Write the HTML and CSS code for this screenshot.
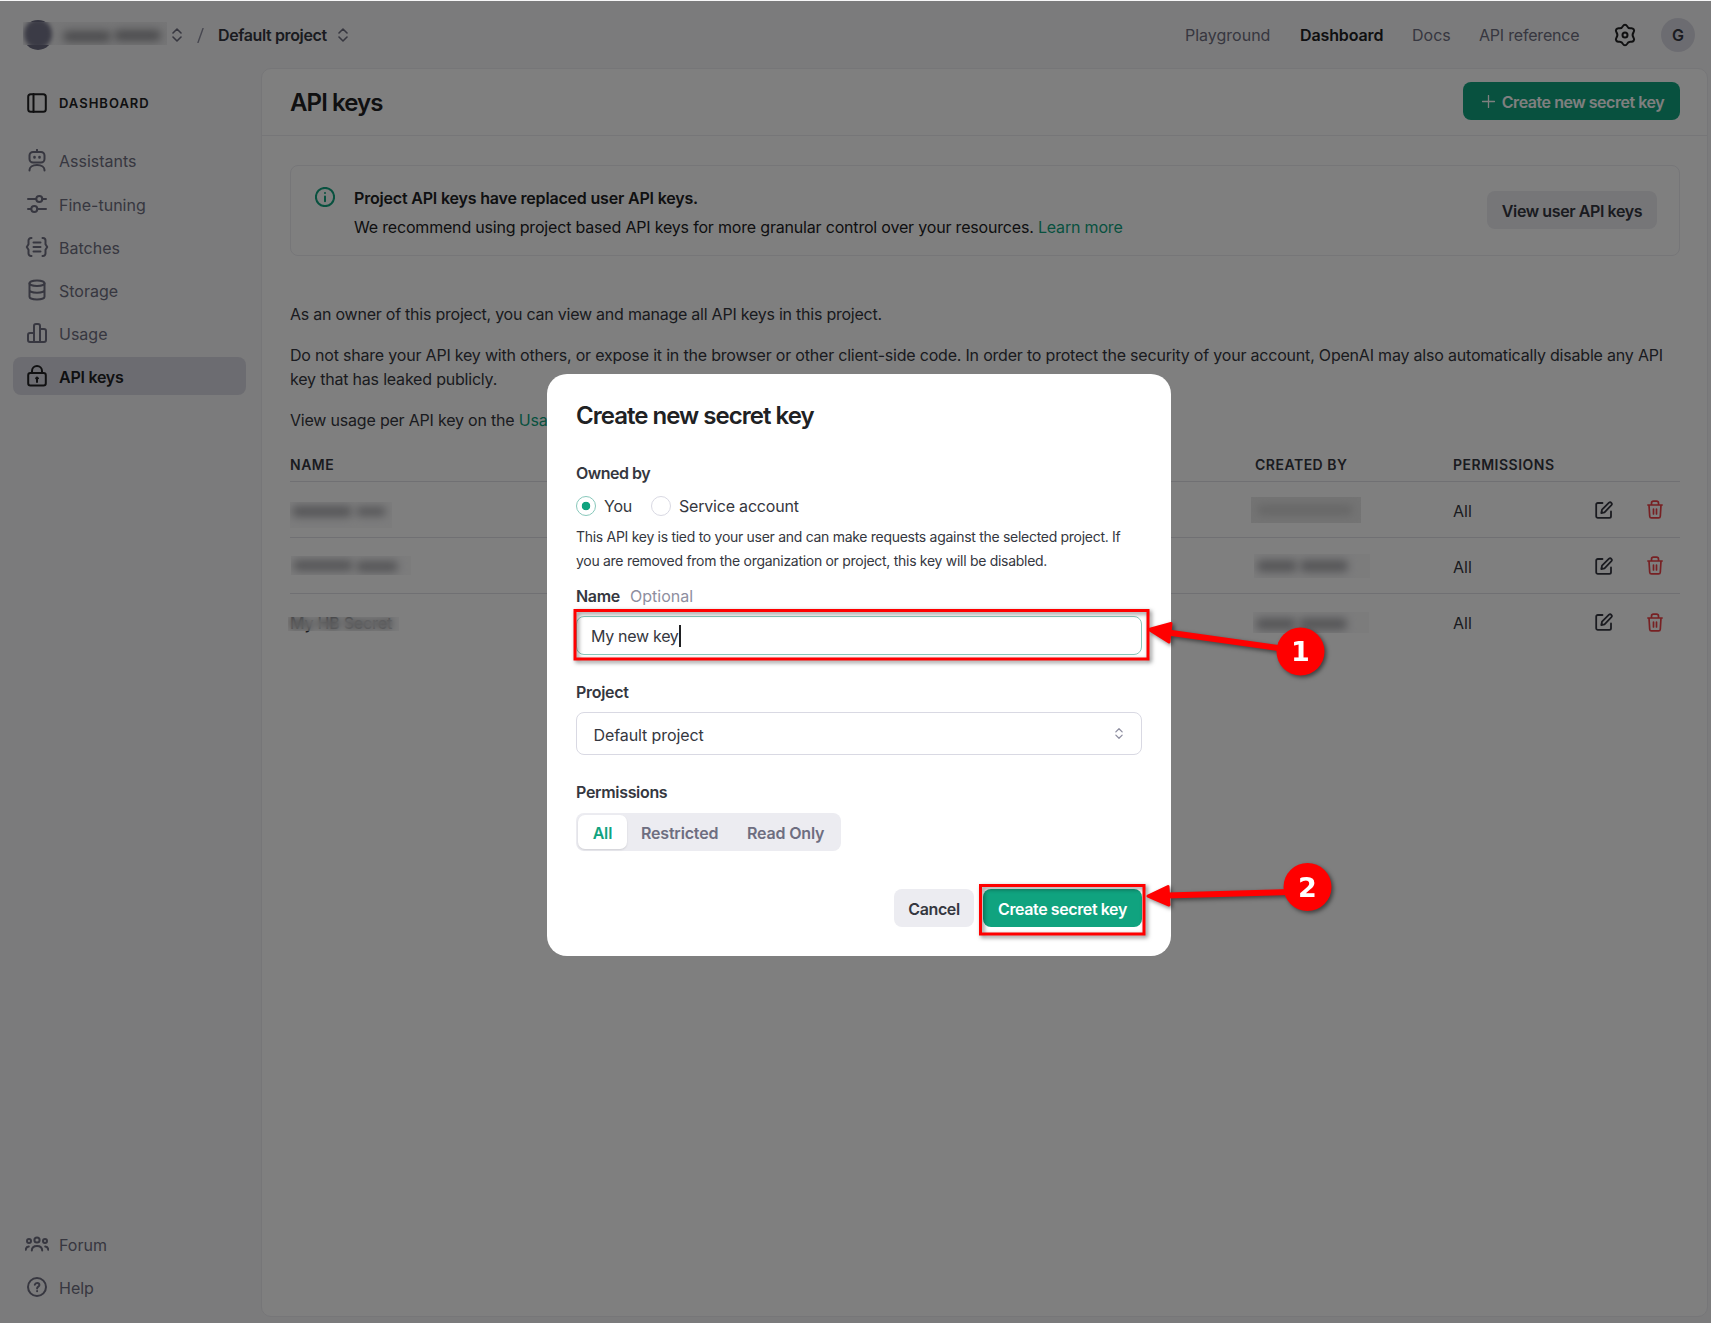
FILE: index.html
```html
<!DOCTYPE html>
<html lang="en">
<head>
<meta charset="utf-8">
<title>API keys</title>
<link rel="stylesheet" href="styles.css">
</head>
<body>
<div class="app">
  <header class="topbar">
    <div class="crumbs">
      <div class="org"><span class="org-avatar"></span><span class="org-veil"><i class="org-dot"></i><i class="smudge smudge-org-a"></i><i class="smudge smudge-org-b"></i></span></div>
      <svg class="updown" viewBox="0 0 10 14"><path d="M1 5l4-4 4 4M1 9l4 4 4-4"/></svg>
      <svg class="slash" viewBox="0 0 7 15"><path d="M6 .5L1 14.5"/></svg>
      <span class="crumb-project">Default project</span>
      <svg class="updown" viewBox="0 0 10 14"><path d="M1 5l4-4 4 4M1 9l4 4 4-4"/></svg>
    </div>
    <nav class="topnav">
      <a class="nav-play">Playground</a>
      <a class="nav-dash">Dashboard</a>
      <a class="nav-docs">Docs</a>
      <a class="nav-ref">API reference</a>
      <svg class="gear" viewBox="0 0 24 24"><path d="M14.100 3.100C14.900 4.900 16.200 5.500 17.900 5.200C20.500 4.900 21.900 7.300 20.600 9.200C19.300 11 19.300 13 20.600 14.800C21.900 16.700 20.500 19.100 17.900 18.800C16.200 18.500 14.900 19.100 14.100 20.900C13.100 22.800 10.900 22.800 9.900 20.900C9.100 19.100 7.800 18.500 6.100 18.800C3.500 19.100 2.100 16.700 3.400 14.800C4.700 13 4.700 11 3.400 9.200C2.100 7.300 3.500 4.900 6.100 5.200C7.800 5.500 9.100 4.900 9.900 3.100C10.900 1.200 13.100 1.200 14.100 3.100z"/><circle cx="12" cy="12" r="2.500"/></svg>
      <span class="avatar">G</span>
    </nav>
  </header>
  <div class="body">
    <aside class="sidebar">
      <div class="side-title"><svg viewBox="0 0 24 24"><rect x="3.200" y="3.200" width="17.600" height="17.600" rx="2.500"/><path d="M8.500 3v18"/></svg><span>DASHBOARD</span></div>
      <a class="item first"><svg viewBox="0 0 24 24"><rect x="4.500" y="3" width="15" height="10.500" rx="3.500"/><path d="M12 .8v2M4.500 21.500v-.5c0-2.800 2.700-5 7.500-5s7.500 2.200 7.500 5v.5"/><path class="dots" d="M9.500 8.100v.3M14.500 8.100v.3"/></svg><span>Assistants</span></a>
      <a class="item"><svg viewBox="0 0 24 24"><path d="M3 7h8M17 7h4M3 17h3M12 17h9"/><circle cx="14.300" cy="7" r="3"/><circle cx="9.300" cy="17" r="3"/></svg><span>Fine-tuning</span></a>
      <a class="item"><svg viewBox="0 0 24 24"><path d="M6.500 3H6a2.500 2.500 0 0 0-2.500 2.500v3.700L1.800 12l1.700 2.800v3.700A2.500 2.500 0 0 0 6 21h.5M17.500 3h.5a2.500 2.500 0 0 1 2.500 2.500v3.700l1.700 2.800-1.700 2.800v3.700A2.500 2.500 0 0 1 18 21h-.5M8.500 7.500h7M8.500 12h7M8.500 16.500h7"/></svg><span>Batches</span></a>
      <a class="item"><svg viewBox="0 0 24 24"><ellipse cx="12" cy="5.200" rx="7.500" ry="2.800"/><path d="M4.500 5.200v13.600c0 1.500 3.300 2.800 7.500 2.800s7.500-1.300 7.500-2.800V5.200M4.500 12c0 1.500 3.300 2.800 7.500 2.800s7.500-1.300 7.500-2.800"/></svg><span>Storage</span></a>
      <a class="item"><svg viewBox="0 0 24 24"><path d="M9 21H5a2 2 0 0 1-2-2v-5a2 2 0 0 1 2-2h4m0 9V5a2 2 0 0 1 2-2h2a2 2 0 0 1 2 2v16m-6 0h10a2 2 0 0 0 2-2v-9a2 2 0 0 0-2-2h-4"/></svg><span>Usage</span></a>
      <a class="item active"><svg viewBox="0 0 24 24"><rect x="3.200" y="9" width="17.600" height="12.500" rx="2.200"/><path d="M7 9V7a5 5 0 0 1 10 0v2M12 15v3"/><circle class="fill" cx="12" cy="14.300" r="1.300"/></svg><span>API keys</span></a>
      <div class="side-foot">
        <a class="item"><svg viewBox="0 0 24 18"><circle cx="12" cy="5" r="2.600"/><circle cx="4" cy="6" r="2"/><circle cx="20" cy="6" r="2"/><path d="M6.800 15.500c0-3 2.200-4.600 5.200-4.600s5.200 1.600 5.200 4.600M.8 14.800c0-1.900 1.200-3.100 3-3.300M23.200 14.800c0-1.900-1.200-3.100-3-3.300"/></svg><span>Forum</span></a>
        <a class="item"><svg viewBox="0 0 24 24"><circle cx="12" cy="12" r="9"/><path d="M9.800 9.700c.3-1.200 1.200-1.800 2.300-1.800 1.300 0 2.300.9 2.300 2 0 1.700-2.300 1.700-2.300 3.500M12.100 16v.3"/></svg><span>Help</span></a>
      </div>
    </aside>
    <main class="panel">
      <div class="panel-head">
        <h1>API keys</h1>
        <button class="btn create"><svg viewBox="0 0 14 14"><path d="M7 .5v13M.5 7h13"/></svg><span>Create new secret key</span></button>
      </div>
      <div class="content">
        <section class="notice">
          <svg class="info" viewBox="0 0 20 20"><circle cx="10" cy="10" r="9.100"/><path d="M10 9.500v4.700M10 5.900v.1"/></svg>
          <div class="notice-text"><strong>Project API keys have replaced user API keys.</strong><p>We recommend using project based API keys for more granular control over your resources. <a>Learn more</a></p></div>
          <button class="btn view">View user API keys</button>
        </section>
        <div class="prose">
          <p class="p1">As an owner of this project, you can view and manage all API keys in this project.</p>
          <p>Do not share your API key with others, or expose it in the browser or other client-side code. In order to protect the security of your account, OpenAI may also automatically disable any API<br>key that has leaked publicly.</p>
          <p>View usage per API key on the <a>Usa</a></p>
        </div>
        <div class="table">
          <div class="row head"><span>NAME</span><span>CREATED BY</span><span>PERMISSIONS</span></div>
          <div class="row"><span class="veil v1"><i class="smudge w1"></i><i class="smudge w2"></i></span><span class="veil c1"><i class="smudge w5"></i></span><span class="all">All</span><svg class="edit" viewBox="0 0 18 18"><path d="M7.500 2H2.800A1.600 1.600 0 0 0 1.200 3.600v11.600a1.600 1.600 0 0 0 1.600 1.600h11.600a1.600 1.600 0 0 0 1.600-1.600v-4.700M7 8.700L14 1.700a1.700 1.700 0 0 1 2.400 2.400L9.500 11.300l-3.200.7z"/></svg><svg class="trash" viewBox="0 0 16 19"><path d="M.8 5h14.400M4.500 5V3.200a2 2 0 0 1 2-2h3a2 2 0 0 1 2 2V5M2 5l.7 11.200a1.800 1.800 0 0 0 1.800 1.700h7a1.800 1.800 0 0 0 1.800-1.700L14 5M6.500 9v5M9.500 9v5"/></svg></div>
          <div class="row"><span class="veil v2"><i class="smudge w1"></i><i class="smudge w6"></i></span><span class="veil c2"><i class="smudge w3"></i><i class="smudge w4"></i></span><span class="all">All</span><svg class="edit" viewBox="0 0 18 18"><path d="M7.500 2H2.800A1.600 1.600 0 0 0 1.200 3.600v11.600a1.600 1.600 0 0 0 1.600 1.600h11.600a1.600 1.600 0 0 0 1.600-1.600v-4.700M7 8.700L14 1.700a1.700 1.700 0 0 1 2.400 2.400L9.500 11.300l-3.200.7z"/></svg><svg class="trash" viewBox="0 0 16 19"><path d="M.8 5h14.400M4.500 5V3.200a2 2 0 0 1 2-2h3a2 2 0 0 1 2 2V5M2 5l.7 11.200a1.800 1.800 0 0 0 1.800 1.700h7a1.800 1.800 0 0 0 1.800-1.700L14 5M6.500 9v5M9.500 9v5"/></svg></div>
          <div class="row"><span class="peek">My HB Secret</span><span class="veil c3"><i class="smudge w3"></i><i class="smudge w4"></i></span><span class="all">All</span><svg class="edit" viewBox="0 0 18 18"><path d="M7.500 2H2.800A1.600 1.600 0 0 0 1.200 3.600v11.600a1.600 1.600 0 0 0 1.600 1.600h11.600a1.600 1.600 0 0 0 1.600-1.600v-4.700M7 8.700L14 1.700a1.700 1.700 0 0 1 2.400 2.400L9.500 11.300l-3.200.7z"/></svg><svg class="trash" viewBox="0 0 16 19"><path d="M.8 5h14.400M4.500 5V3.200a2 2 0 0 1 2-2h3a2 2 0 0 1 2 2V5M2 5l.7 11.200a1.800 1.800 0 0 0 1.800 1.700h7a1.800 1.800 0 0 0 1.800-1.700L14 5M6.500 9v5M9.500 9v5"/></svg></div>
        </div>
      </div>
    </main>
  </div>
</div>
<div class="overlay">
  <div class="modal">
    <h2>Create new secret key</h2>
    <div class="label l-own">Owned by</div>
    <div class="radios"><i class="radio on"></i><span class="r-you">You</span><i class="radio"></i><span class="r-svc">Service account</span></div>
    <p class="hint">This API key is tied to your user and can make requests against the selected project. If<br>you are removed from the organization or project, this key will be disabled.</p>
    <div class="label l-name"><span>Name</span><span class="optional">Optional</span></div>
    <div class="input"><span>My new key</span><i class="caret"></i></div>
    <div class="label l-proj">Project</div>
    <div class="select"><span>Default project</span><svg viewBox="0 0 10 14"><path d="M1 5l4-4 4 4M1 9l4 4 4-4"/></svg></div>
    <div class="label l-perm">Permissions</div>
    <div class="segment"><span class="seg on">All</span><span class="seg g-res">Restricted</span><span class="seg g-read">Read Only</span></div>
    <div class="actions"><button class="btn cancel">Cancel</button><button class="btn submit">Create secret key</button></div>
  </div>
</div>
<svg class="marks" viewBox="0 0 1711 1323">
  <rect x="575" y="610.500" width="573" height="48.500"/>
  <rect x="980.500" y="885.500" width="163.500" height="48.500"/>
  <path d="M1168 632.500L1285 649M1166 895.500L1290 892" class="shaft"/>
  <path d="M1149 629.500L1171 623.500 1169 642zM1148 896L1168 886.500 1169 905z" class="tip"/>
  <circle cx="1300.500" cy="651.500" r="24"/><circle cx="1307.500" cy="887" r="24"/>
  <text x="1300.500" y="661">1</text><text x="1307.500" y="897">2</text>
</svg>
</body>
</html>
```
FILE: styles.css
```css
* { box-sizing: border-box; }
body { margin: 0; font-family: Inter, "Liberation Sans", sans-serif; font-size: 16px; line-height: 24px; color: #353740; background: #f7f7f8; overflow: hidden; }
h1, h2, p { margin: 0; }
svg { display: block; flex: none; fill: none; stroke: currentColor; stroke-width: 2; stroke-linecap: round; stroke-linejoin: round; }
i { display: block; }
a { color: inherit; white-space: nowrap; }
span { white-space: nowrap; }
.btn { font: inherit; font-weight: 600; letter-spacing: -.4px; border: 0; border-radius: 8px; height: 38px; padding: 2px 0 0; display: flex; align-items: center; justify-content: center; white-space: nowrap; color: #353740; background: #ececf1; flex: none; }

.app { height: 1323px; display: flex; flex-direction: column; }
.topbar { height: 68px; display: flex; justify-content: space-between; padding: 2px 16px 0 23px; }
.crumbs, .topnav { display: flex; align-items: center; height: 66px; }
.org { position: relative; width: 144px; height: 30px; margin-right: 5px; }
.org-avatar { position: absolute; left: 0; top: 0; width: 30px; height: 30px; border-radius: 50%; background: #6a6a80; }
.org-veil { position: absolute; left: 0; top: 2px; width: 144px; height: 23px; background: #ececee; overflow: hidden; }
.org-dot { position: absolute; left: 1px; top: -3px; width: 28px; height: 30px; border-radius: 50%; background: #77778c; filter: blur(2px); }
.smudge { background: #acacb0; border-radius: 5px; filter: blur(4px); position: absolute; }
.smudge-org-a { left: 40px; top: 9px; width: 48px; height: 11px; background: #98989c; }
.smudge-org-b { left: 91px; top: 8px; width: 47px; height: 11px; background: #98989c; }
.updown { width: 10px; height: 14px; stroke-width: 1.6; color: #6e6e80; }
.slash { width: 7px; height: 15px; margin: 0 14px 0 15px; stroke-width: 1.4; color: #8e8ea0; }
.crumb-project { font-weight: 600; width: 120px; letter-spacing: -.38px; }
.topnav { color: #6e6e80; }
.nav-play { width: 115px; }
.nav-dash { width: 112px; color: #202123; font-weight: 600; letter-spacing: -.12px; }
.nav-docs { width: 67px; }
.nav-ref { width: 134px; letter-spacing: -.2px; }
.gear { width: 24px; height: 24px; color: #202123; margin-right: 24px; }
.avatar { width: 34px; height: 34px; border-radius: 50%; background: #d9d9e3; color: #353740; font-weight: 600; display: grid; place-items: center; }

.body { flex: 1; display: flex; padding: 0 3px 6px 0; min-height: 0; }
.sidebar { width: 261px; padding: 16px 15px 6px 13px; display: flex; flex-direction: column; }
.side-title, .item { display: flex; align-items: center; gap: 10px; padding-left: 12px; height: 38px; margin-bottom: 5px; color: #6e6e80; border-radius: 8px; }
.item span { padding-top: 2px; }
.item.first span { padding-top: 0; }
.side-title { color: #202123; font-size: 13px; font-weight: 600; letter-spacing: 1px; margin-bottom: 20px; }
.side-title svg, .item svg { width: 24px; height: 24px; }
.item .dots { stroke-width: 2.6; }
.item .fill { fill: currentColor; stroke-width: 1; }
.item.active { background: #d9d9e3; color: #202123; font-weight: 600; letter-spacing: -.25px; }
.side-foot { margin-top: auto; }

.panel { flex: 1; border: 1px solid #ececf1; border-radius: 10px; background: #fff; min-width: 0; }
.panel-head { height: 67px; border-bottom: 1px solid #ececf1; padding: 0 27px 0 28px; display: flex; justify-content: space-between; align-items: center; }
h1 { font-size: 24px; font-weight: 600; letter-spacing: -.9px; color: #202123; padding-top: 2px; }
.create { width: 217px; background: #10a37f; color: #fff; gap: 7px; padding: 0 0 0 3px; letter-spacing: -.46px; margin-bottom: 2px; }
.create span { padding-top: 1px; }
.create svg { width: 13px; height: 13px; stroke-width: 1.4; }
.content { padding: 29px 27px 0 28px; }
.notice { height: 91px; border: 1px solid #ececf1; border-radius: 8px; display: flex; padding: 0 22px 0 24px; align-items: center; color: #202123; }
.info { width: 20px; height: 20px; color: #10a37f; margin: -28px 19px 0 0; }
.notice-text { flex: 1; padding-top: 3px; letter-spacing: -.185px; }
.notice-text strong { display: block; font-weight: 600; margin-bottom: 5px; }
.notice a, .prose a { color: #10a37f; }
.view { width: 170px; margin-bottom: 2px; }
.prose { padding-top: 46px; display: grid; gap: 17px; letter-spacing: -.2px; }
.prose p { white-space: nowrap; }
.prose .p1 { letter-spacing: -.235px; }
.table { margin-top: 21px; }
.row { display: grid; grid-template-columns: 965px 198px 142px 52px 1fr; align-items: center; height: 56.200px; border-bottom: 1px solid #e0e0e6; }
.row:last-child { border-bottom: 0; }
.row.head { height: 29px; align-items: start; font-size: 14px; font-weight: 600; letter-spacing: .5px; }
.all { padding-top: 2px; }
.edit { width: 18px; height: 18px; stroke-width: 1.8; }
.trash { width: 16px; height: 19px; color: #ef4146; stroke-width: 1.7; }
.veil { position: relative; display: block; overflow: hidden; background: #f8f8f9; }
.v1 { width: 102px; height: 26px; margin-top: 10px; }
.v2 { width: 120px; height: 19px; left: 1px; }
.c1 { width: 110px; height: 26px; left: -4px; background: #e8e8e8; }
.c2 { width: 116px; height: 24px; left: -1px; }
.c3 { width: 116px; height: 21px; left: -2px; }
.w1 { left: 2px; top: 4px; width: 60px; height: 11px; }
.w2 { left: 66px; top: 5px; width: 30px; height: 9px; }
.w6 { left: 65px; top: 5px; width: 42px; height: 11px; }
.w3 { left: 3px; top: 6px; width: 40px; height: 12px; }
.w4 { left: 46px; top: 6px; width: 48px; height: 12px; }
.w5 { left: 6px; top: 8px; width: 96px; height: 10px; background: #cdcdcd; }
.peek { position: relative; justify-self: start; font-weight: 500; letter-spacing: -.2px; padding-top: 2px; }
.peek::after { content: ""; position: absolute; left: -2px; top: 8px; width: 111px; height: 14px; backdrop-filter: blur(3.500px); background: #e5e5e655; }

.overlay { position: fixed; inset: 1px 0 0; background: rgba(0,0,0,.5); }
.modal { margin: 373px 0 0 547px; width: 624px; height: 582px; background: #fff; border-radius: 20px; padding: 30px 29px 0; }
h2 { font-size: 24px; font-weight: 600; letter-spacing: -.98px; color: #202123; }
.label { font-weight: 600; letter-spacing: -.3px; }
.l-own { margin-top: 33px; letter-spacing: -.5px; }
.radios { display: flex; align-items: center; margin-top: 8px; }
.radios span { padding-top: 1px; letter-spacing: -.2px; }
.radio { width: 20px; height: 20px; border: 1px solid #d9d9e3; border-radius: 50%; margin-right: 8px; }
.radio.on { border-color: #88c8bb; background: radial-gradient(circle, #10a37f 4px, #fff 4.600px); }
.r-you { width: 47px; }
.hint { font-size: 14px; letter-spacing: -.29px; white-space: nowrap; margin-top: 7px; }
.l-name { margin-top: 11px; display: flex; }
.l-name span:first-child { width: 54px; }
.l-name .optional { font-weight: 400; color: #8e8ea0; letter-spacing: 0; }
.input { margin-top: 8px; height: 39px; border: 1px solid #88c8bb; border-radius: 8px; display: flex; align-items: center; padding-left: 14px; letter-spacing: -.3px; }
.caret { width: 2px; height: 22px; background: #202123; }
.l-proj { margin-top: 25px; }
.select { margin-top: 8px; height: 43px; border: 1px solid #d9d9e3; border-radius: 8px; display: flex; align-items: center; justify-content: space-between; padding: 0 18px 0 16.500px; letter-spacing: -.1px; }
.select span { padding-top: 2px; }
.select svg { width: 8px; height: 11px; color: #8e8ea0; stroke-width: 1.6; }
.l-perm { margin-top: 25px; letter-spacing: -.32px; }
.segment { margin-top: 9px; width: 265px; height: 38px; border-radius: 8px; background: #ececf1; padding: 2px; display: flex; font-weight: 600; letter-spacing: -.17px; color: #6e6e80; }
.seg { display: grid; place-items: center; height: 34px; padding-top: 2px; }
.seg.on { width: 49px; background: #fff; border-radius: 7px; color: #10a37f; box-shadow: 0 1px 2px rgba(0,0,0,.12); }
.g-res { width: 106px; }
.g-read { width: 107px; }
.actions { display: flex; justify-content: flex-end; gap: 9px; margin-top: 38px; }
.cancel { width: 80px; }
.submit { width: 159px; background: #10a37f; color: #fff; }

.marks { position: absolute; left: 0; top: 0; width: 1711px; height: 1323px; filter: drop-shadow(2px 2px 2px rgba(0,0,0,.5)); stroke: #f00; stroke-width: 3; stroke-linejoin: miter; }
.marks .shaft { stroke-width: 6; }
.marks .tip { fill: #f00; stroke-linejoin: round; }
.marks circle { fill: #f00; stroke: none; }
.marks text { fill: #fff; stroke: none; font: bold 27px "DejaVu Sans", sans-serif; text-anchor: middle; }
```
